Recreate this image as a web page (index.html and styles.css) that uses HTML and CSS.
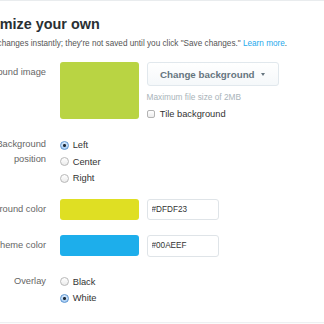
FILE: index.html
```html
<!DOCTYPE html>
<html lang="en">
<head>
<meta charset="utf-8">
<title>Customize your own</title>
<link rel="stylesheet" href="styles.css">
</head>
<body>
<div class="topline"></div>
<div class="page">
  <h2 class="title">Customize your own</h2>
  <p class="intro">See your changes instantly; they're not saved until you click "Save changes." <a class="link" href="#">Learn more</a>.</p>
  <div class="form">
    <div class="row row-image">
      <div class="label">Background image</div>
      <div class="controls">
        <div class="swatch swatch-lg"></div>
        <div class="side">
          <button class="btn" type="button">Change background <span class="caret"></span></button>
          <div class="help">Maximum file size of 2MB</div>
          <label class="check-row"><span class="checkbox"></span>Tile background</label>
        </div>
      </div>
    </div>
    <div class="row row-position">
      <div class="label label-multi">Background<br>position</div>
      <div class="options">
        <div class="option"><span class="radio on"></span>Left</div>
        <div class="option"><span class="radio"></span>Center</div>
        <div class="option"><span class="radio"></span>Right</div>
      </div>
    </div>
    <div class="row row-color">
      <div class="label label-color">Background color</div>
      <div class="controls">
        <div class="swatch swatch-sm swatch-yellow"></div>
        <input class="hex" type="text" value="#DFDF23">
      </div>
    </div>
    <div class="row row-color row-theme">
      <div class="label label-color">Theme color</div>
      <div class="controls">
        <div class="swatch swatch-sm swatch-blue"></div>
        <input class="hex" type="text" value="#00AEEF">
      </div>
    </div>
    <div class="row row-overlay">
      <div class="label label-overlay">Overlay</div>
      <div class="options">
        <div class="option"><span class="radio"></span>Black</div>
        <div class="option"><span class="radio on"></span>White</div>
      </div>
    </div>
  </div>
</div>
<div class="footer"></div>
</body>
</html>
```

FILE: styles.css
```css
html, body {
  margin: 0;
  padding: 0;
  height: 324px;
  overflow: hidden;
  background: #fff;
}

body {
  font-family: "Liberation Sans", Arial, Helvetica, sans-serif;
}

.topline {
  height: 1px;
  background: #e9ecee;
}

.page {
  margin-left: -41px;
}

.title {
  margin: 14.8px 0 0;
  font-size: 14.4px;
  line-height: 17px;
  font-weight: bold;
  color: #292f33;
}

.intro {
  margin: 5.5px 0 0;
  padding-left: 3.5px;
  font-size: 8.2px;
  line-height: 12px;
  color: #555;
  white-space: nowrap;
}

.link {
  color: #1fa9ec;
  text-decoration: none;
}

.form {
  margin-top: 11.7px;
}

.row {
  display: flex;
  align-items: flex-start;
}

.label {
  flex: none;
  width: 87px;
  margin-right: 14px;
  text-align: right;
  font-size: 9.3px;
  color: #666;
  white-space: nowrap;
}

.row-image .label {
  padding-top: 4px;
  line-height: 12px;
}

.controls {
  display: flex;
  gap: 7.5px;
}

.swatch {
  width: 79px;
  border-radius: 3px;
}

.swatch-lg {
  height: 57px;
  background: #b9d443;
}

.side {
  display: flex;
  flex-direction: column;
  align-items: flex-start;
}

.btn {
  width: 132px;
  height: 24.4px;
  box-sizing: border-box;
  margin: 0;
  padding: 0;
  border: 1px solid #e1e8ed;
  border-radius: 3px;
  background: linear-gradient(#fff, #f5f8fa);
  display: flex;
  align-items: center;
  justify-content: center;
  gap: 6.5px;
  font-family: inherit;
  font-weight: bold;
  font-size: 9.8px;
  color: #66757f;
}

.caret {
  width: 0;
  height: 0;
  border-left: 2.5px solid transparent;
  border-right: 2.5px solid transparent;
  border-top: 3px solid #66757f;
}

.help {
  margin-top: 5px;
  font-size: 8.3px;
  line-height: 12px;
  color: #a9b4ba;
}

.check-row {
  margin-top: 4.5px;
  display: flex;
  align-items: center;
  gap: 5.3px;
  font-size: 9.3px;
  line-height: 12px;
  color: #333;
}

.checkbox {
  width: 8px;
  height: 8px;
  box-sizing: border-box;
  border: 1px solid #b3b3b3;
  border-radius: 2px;
  background: linear-gradient(#fff, #ececec);
}

.row-position {
  margin-top: 16.85px;
}

.label-multi {
  padding-top: 0.75px;
  line-height: 15px;
}

.options {
  display: flex;
  flex-direction: column;
}

.option {
  display: flex;
  align-items: center;
  gap: 3.7px;
  height: 16.7px;
  font-size: 9.3px;
  color: #333;
}

.radio {
  width: 9px;
  height: 9px;
  box-sizing: border-box;
  border-radius: 50%;
  border: 1px solid #b8b8b8;
  background: linear-gradient(#fff, #ebebeb);
}

.radio.on {
  border-color: #5b95d2;
  background: radial-gradient(circle, #1e2a36 0, #1e2a36 1.2px, rgba(30, 42, 54, 0) 1.8px), linear-gradient(#d7e8fa, #a9cdf2);
}

.row-color {
  margin-top: 12.15px;
}

.row-theme {
  margin-top: 15px;
}

.label-color {
  line-height: 21px;
}

.swatch-sm {
  height: 21px;
}

.swatch-yellow {
  background: #dfdf23;
}

.swatch-blue {
  background: #1daeeb;
}

.hex {
  width: 72px;
  height: 21.3px;
  box-sizing: border-box;
  margin: 0;
  padding: 0 0 0 4px;
  border: 1px solid #dfe4e8;
  border-radius: 3px;
  background: #fff;
  font-family: "Liberation Sans", Arial, sans-serif;
  font-size: 8.2px;
  color: #333;
  outline: none;
}

.row-overlay {
  margin-top: 16.9px;
}

.label-overlay {
  line-height: 16.7px;
}

.footer {
  margin-top: 15px;
  height: 1px;
  border-top: 1px solid #eef0f2;
  background: #fbfcfc;
}
```
